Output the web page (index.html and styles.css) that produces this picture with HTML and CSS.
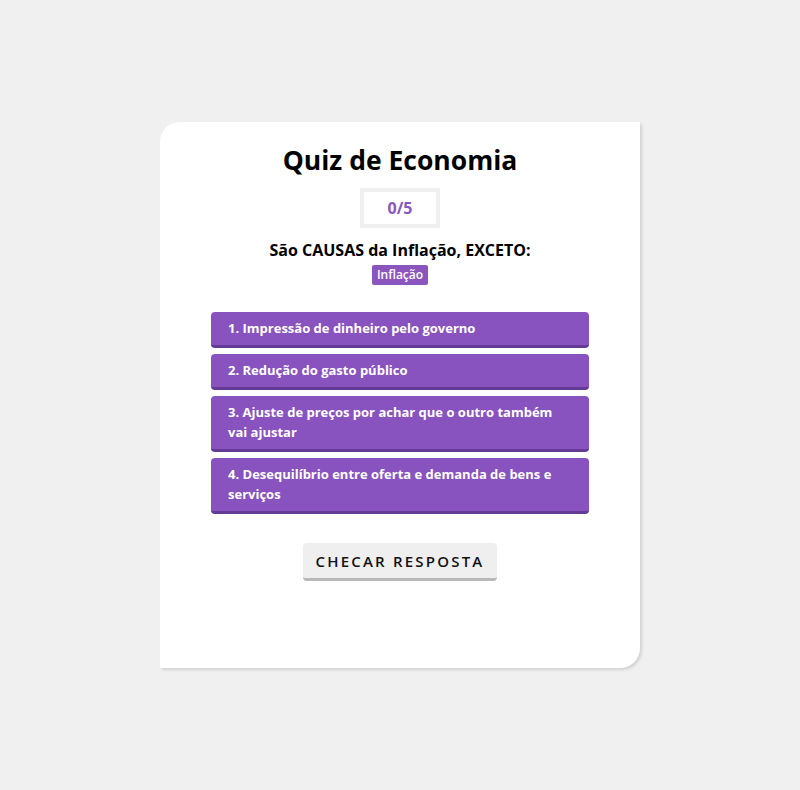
FILE: index.html
```html
<!DOCTYPE html>
<html lang="pt-BR">
<head>
<meta charset="utf-8">
<title>Quiz de Economia</title>
<link rel="stylesheet" href="styles.css">
</head>
<body>
<main class="card">
  <h1 class="title">Quiz de Economia</h1>
  <div class="score">0/5</div>
  <p class="question">São CAUSAS da Inflação, EXCETO:</p>
  <span class="tag">Inflação</span>
  <ul class="options">
    <li class="option">1. Impressão de dinheiro pelo governo</li>
    <li class="option">2. Redução do gasto público</li>
    <li class="option">3. Ajuste de preços por achar que o outro também vai ajustar</li>
    <li class="option">4. Desequilíbrio entre oferta e demanda de bens e serviços</li>
  </ul>
  <button class="check">CHECAR RESPOSTA</button>
</main>
</body>
</html>
```
FILE: styles.css
```css
* { box-sizing: border-box; }
html, body { margin: 0; padding: 0; }
body {
  background: #f0f0f0;
  font-family: "Open Sans", "Liberation Sans", sans-serif;
  min-height: 790px;
  padding-top: 122px;
}
.card {
  width: 480px;
  height: 546px;
  margin: 0 auto;
  background: #fff;
  border-radius: 20px 0 20px 0;
  box-shadow: 2px 2px 3px rgba(0,0,0,0.12);
  display: flex;
  flex-direction: column;
  align-items: center;
  padding-top: 20px;
}
.title {
  margin: 0;
  font-size: 26.5px;
  font-weight: 700;
  color: #000;
  line-height: 36px;
}
.score {
  margin-top: 10px;
  width: 80px;
  height: 40px;
  border: 4px solid #efefef;
  color: #8a56be;
  font-weight: 700;
  font-size: 16px;
  display: flex;
  align-items: center;
  justify-content: center;
}
.question {
  margin: 10px 0 0;
  font-size: 16px;
  font-weight: 700;
  line-height: 24px;
  color: #000;
}
.tag {
  margin-top: 3px;
  background: #8a56be;
  color: #fff;
  font-size: 12px;
  font-weight: 600;
  padding: 1px 5px;
  line-height: 18px;
  border-radius: 2px;
}
.options {
  list-style: none;
  margin: 27px 0 0;
  padding: 0;
  width: 378px;
  display: flex;
  flex-direction: column;
  gap: 6px;
}
.option {
  background: #8853be;
  color: #fff;
  font-size: 13px;
  font-weight: 700;
  line-height: 20px;
  padding: 6px 17px 7px;
  border-radius: 4px;
  border-bottom: 3px solid #643a97;
}
.check {
  margin-top: 29px;
  width: 194px;
  height: 38px;
  background: #efefef;
  border: none;
  border-bottom: 3px solid #b9b9b9;
  border-radius: 4px;
  font-family: inherit;
  font-size: 15px;
  font-weight: 600;
  letter-spacing: 2.2px;
  color: #111;
  padding: 0;
}
```
